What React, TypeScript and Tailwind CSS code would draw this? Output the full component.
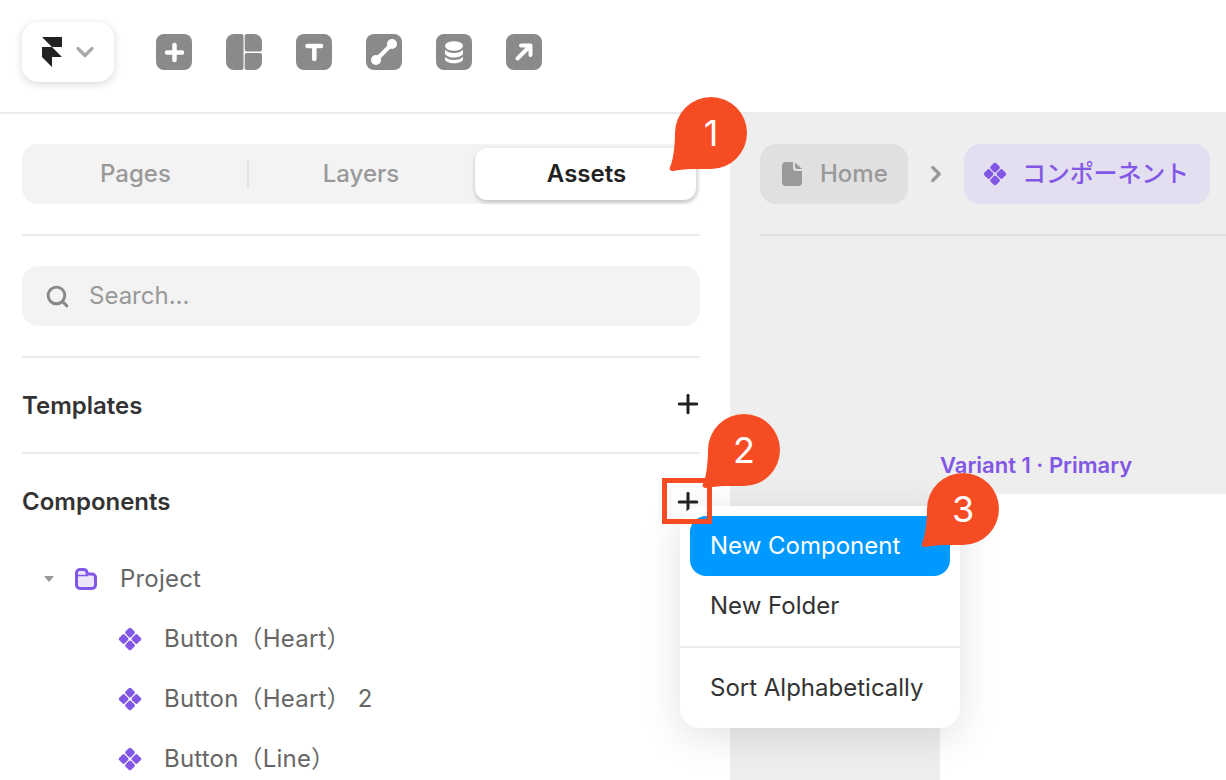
import { Search, Plus, ChevronDown, ChevronRight } from 'lucide-react';

const fontClass = "[font-family:Inter,'Noto_Sans_CJK_JP',sans-serif]";

function ToolTile({ children }: { children: React.ReactNode }) {
  return (
    <svg width="36" height="36" viewBox="0 0 36 36" className="shrink-0">
      <rect width="36" height="36" rx="8" fill="#8a8a8a" />
      {children}
    </svg>
  );
}

function ComponentIcon() {
  return (
    <svg width="24" height="24" viewBox="0 0 24 24" className="shrink-0" fill="#8257e5">
      <rect x="8.050" y="1.650" width="7.900" height="7.900" rx="1.800" transform="rotate(45 12 5.600)" />
      <rect x="8.050" y="14.450" width="7.900" height="7.900" rx="1.800" transform="rotate(45 12 18.400)" />
      <rect x="1.650" y="8.050" width="7.900" height="7.900" rx="1.800" transform="rotate(45 5.600 12)" />
      <rect x="14.450" y="8.050" width="7.900" height="7.900" rx="1.800" transform="rotate(45 18.400 12)" />
    </svg>
  );
}

function Bubble({ n, className }: { n: number; className: string }) {
  return (
    <div className={`absolute z-20 w-[78px] h-[74px] ${className}`}>
      <svg width="78" height="74" viewBox="0 0 78 74" className="absolute inset-0">
        <path
          d="M42 0A36 36 0 0 1 42 72H22C16 72 10 73 4 74C1 74 0 72 1 70C4 64 6 50 6 36A36 36 0 0 1 42 0Z"
          fill="#f64c24"
        />
      </svg>
      <span className="absolute left-[6px] top-0 w-[72px] h-[72px] flex items-center justify-center text-white text-[36px] leading-none">
        {n}
      </span>
    </div>
  );
}

function TreeRow({ label }: { label: string }) {
  return (
    <div className="h-[60px] flex items-center pl-[96px] gap-[22px] shrink-0">
      <ComponentIcon />
      <span className="text-[24px] tracking-[0.2px] text-[#666] whitespace-pre">{label}</span>
    </div>
  );
}

export default function App() {
  return (
    <div className={`relative w-[1226px] h-[780px] overflow-hidden bg-white ${fontClass}`}>
      {/* Toolbar */}
      <div className="h-[114px] border-b-2 border-[#ececec] flex items-center pb-[8px] pl-[22px]">
        <div className="w-[92px] h-[60px] rounded-[16px] bg-white shadow-[0_2px_8px_rgba(0,0,0,0.16)] flex items-center pl-[20px] gap-[10px]">
          <svg width="20" height="30" viewBox="0 0 20 30" fill="#222">
            <path d="M0 0h20v10H10L0 0zM0 10h10l10 10H10v10L0 20V10z" />
          </svg>
          <ChevronDown size={28} strokeWidth={2.8} className="text-[#a8a8a8] -ml-[1px]" />
        </div>
        <div className="flex gap-[34px] ml-[42px]">
          <ToolTile>
            <path d="M18.500 11v15M11 18.500h15" stroke="#fff" strokeWidth="4.500" strokeLinecap="round" />
          </ToolTile>
          <svg width="36" height="36" viewBox="0 0 36 36" fill="#8a8a8a" className="shrink-0">
            <path d="M8 0h7.500a2 2 0 0 1 2 2v32a2 2 0 0 1-2 2H8a8 8 0 0 1-8-8V8a8 8 0 0 1 8-8z" />
            <path d="M20.700 0H28a8 8 0 0 1 8 8v7.500a2 2 0 0 1-2 2H20.700a2 2 0 0 1-2-2V2a2 2 0 0 1 2-2z" />
            <path d="M20.700 19H34a2 2 0 0 1 2 2v7a8 8 0 0 1-8 8h-7.300a2 2 0 0 1-2-2V21a2 2 0 0 1 2-2z" />
          </svg>
          <ToolTile>
            <path d="M11.500 12h13.500M18.300 12v13" stroke="#fff" strokeWidth="4.500" strokeLinecap="round" />
          </ToolTile>
          <ToolTile>
            <path d="M10 26L26 10" stroke="#fff" strokeWidth="4" />
            <circle cx="10" cy="26" r="5" fill="#fff" />
            <circle cx="26" cy="10" r="5" fill="#fff" />
          </ToolTile>
          <ToolTile>
            <ellipse cx="18" cy="12" rx="9" ry="4.800" fill="#fff" />
            <path d="M9 15.800c2 2.400 5 3.200 9 3.200s7-.8 9-3.200V19c0 2.500-4 4.500-9 4.500S9 21.500 9 19z" fill="#fff" />
            <path d="M9 22.800c2 2.400 5 3.200 9 3.200s7-.8 9-3.200V25c0 2.500-4 4.300-9 4.300S9 27.500 9 25z" fill="#fff" />
          </ToolTile>
          <ToolTile>
            <path d="M11.500 24.500L24 12M15 11.500h9.500V21" fill="none" stroke="#fff" strokeWidth="4" strokeLinecap="round" strokeLinejoin="round" />
          </ToolTile>
        </div>
      </div>

      <div className="flex h-[666px]">
        {/* Left panel */}
        <div className="w-[730px] shrink-0 pl-[22px] pr-[30px] pt-[30px] flex flex-col">
          <div className="h-[60px] rounded-[16px] bg-[#f3f3f3] flex items-center p-1 shrink-0">
            <div className="w-[222px] pr-[3px] text-center text-[24px] font-medium text-[#999]">Pages</div>
            <div className="w-[2px] h-[28px] bg-[#e2e2e2] -ml-[1px]" />
            <div className="w-[226px] pr-[2px] text-center text-[24px] font-medium text-[#999]">Layers</div>
            <div className="w-[221px] h-[52px] pl-[2px] rounded-[12px] bg-white shadow-[0_2px_4px_rgba(0,0,0,0.22)] flex items-center justify-center text-[24px] font-semibold text-[#222]">
              Assets
            </div>
          </div>
          <div className="h-[2px] bg-[#ececec] mt-[30px] shrink-0" />
          <div className="h-[60px] rounded-[16px] bg-[#f3f3f3] mt-[30px] flex items-center pl-[23px] gap-[19px] shrink-0">
            <Search size={25} strokeWidth={2.8} className="text-[#888]" />
            <span className="text-[24px] text-[#999]">Search...</span>
          </div>
          <div className="h-[2px] bg-[#ececec] mt-[30px] shrink-0" />
          <div className="h-[94px] flex items-center justify-between shrink-0">
            <span className="mt-[2px] text-[24px] font-semibold text-[#333]">Templates</span>
            <Plus size={30} strokeWidth={2.4} className="text-[#222] -mr-[3px] -mt-[2px]" />
          </div>
          <div className="h-[2px] bg-[#ececec] shrink-0" />
          <div className="h-[95px] flex items-center justify-between shrink-0">
            <span className="text-[24px] font-semibold text-[#333]">Components</span>
            <div className="relative -mr-[3px]">
              <Plus size={30} strokeWidth={2.4} className="text-[#222]" />
              <div className="absolute z-10 -left-[11px] -top-[9px] w-[50px] h-[46px] border-[5px] border-[#f64c24]" />
            </div>
          </div>
          <div className="h-[60px] flex items-center shrink-0 pl-[22px]">
            <svg width="10" height="6" viewBox="0 0 10 6" className="shrink-0">
              <path d="M0 0h10L5 6z" fill="#999" />
            </svg>
            <svg width="22" height="22" viewBox="0 0 22 22" className="ml-[21px] shrink-0">
              <path
                d="M1.500 5a3.500 3.500 0 0 1 3.500-3.500h3.500a3.500 3.500 0 0 1 3.500 3.200l.2 1.300h4.800a3.500 3.500 0 0 1 3.500 3.500V17a3.500 3.500 0 0 1-3.500 3.500H5A3.500 3.500 0 0 1 1.500 17z"
                fill="#ece6fa"
                stroke="#8257e5"
                strokeWidth="3"
              />
              <path d="M2 7.500h11" stroke="#8257e5" strokeWidth="1.500" />
            </svg>
            <span className="ml-[23px] text-[24px] tracking-[0.2px] text-[#666]">Project</span>
          </div>
          <TreeRow label="Button（Heart）" />
          <TreeRow label="Button（Heart） 2" />
          <TreeRow label="Button（Line）" />
        </div>

        {/* Canvas */}
        <div className="flex-1 flex flex-col">
          <div className="h-[380px] bg-[#eeeeee] pt-[30px] pl-[30px] flex flex-col">
            <div className="flex items-center">
              <div className="w-[148px] h-[60px] rounded-[16px] bg-[#e0e0e0] flex items-center pl-[22px] gap-[18px]">
                <svg width="20" height="24" viewBox="0 0 20 24" fill="#999">
                  <path d="M4 0h7v6a3 3 0 0 0 3 3h6v11a4 4 0 0 1-4 4H4a4 4 0 0 1-4-4V4a4 4 0 0 1 4-4z" />
                  <path d="M13 .5L20 7h-5a2 2 0 0 1-2-2z" />
                </svg>
                <span className="text-[24px] font-medium text-[#999]">Home</span>
              </div>
              <ChevronRight size={26} strokeWidth={3} className="text-[#999] mx-[15px]" />
              <div className="w-[246px] h-[60px] rounded-[16px] bg-[#e4dff0] flex items-center pl-[19px] gap-[15px]">
                <ComponentIcon />
                <span className="text-[24px] font-medium tracking-[-0.15px] text-[#8257e5] whitespace-nowrap">
                  コンポーネント
                </span>
              </div>
            </div>
            <div className="h-[2px] bg-[#e0e0e0] mt-[30px]" />
            <div className="mt-auto mb-[18px] ml-[180px] text-[22px] font-semibold text-[#8257e5] leading-none">
              Variant 1 · Primary
            </div>
          </div>
          <div className="flex-1 w-[210px] bg-[#eeeeee]" />
        </div>
      </div>

      {/* Add menu */}
      <div className="absolute left-[680px] top-[506px] w-[280px] h-[222px] bg-white rounded-[20px] shadow-[0_8px_40px_rgba(0,0,0,0.12)] p-[10px] flex flex-col">
        <div className="h-[60px] rounded-[16px] bg-[#0099ff] text-white text-[24px] flex items-center pl-[20px] shrink-0">
          New Component
        </div>
        <div className="h-[60px] text-[24px] text-[#333] flex items-center pl-[20px] shrink-0">New Folder</div>
        <div className="h-[2px] -mx-[10px] bg-[#ececec] mt-[10px] shrink-0" />
        <div className="h-[60px] mt-[10px] text-[24px] text-[#333] flex items-center pl-[20px] shrink-0">
          Sort Alphabetically
        </div>
      </div>

      <Bubble n={1} className="left-[669px] top-[97px]" />
      <Bubble n={2} className="left-[702px] top-[414px]" />
      <Bubble n={3} className="left-[921px] top-[473px]" />
    </div>
  );
}
